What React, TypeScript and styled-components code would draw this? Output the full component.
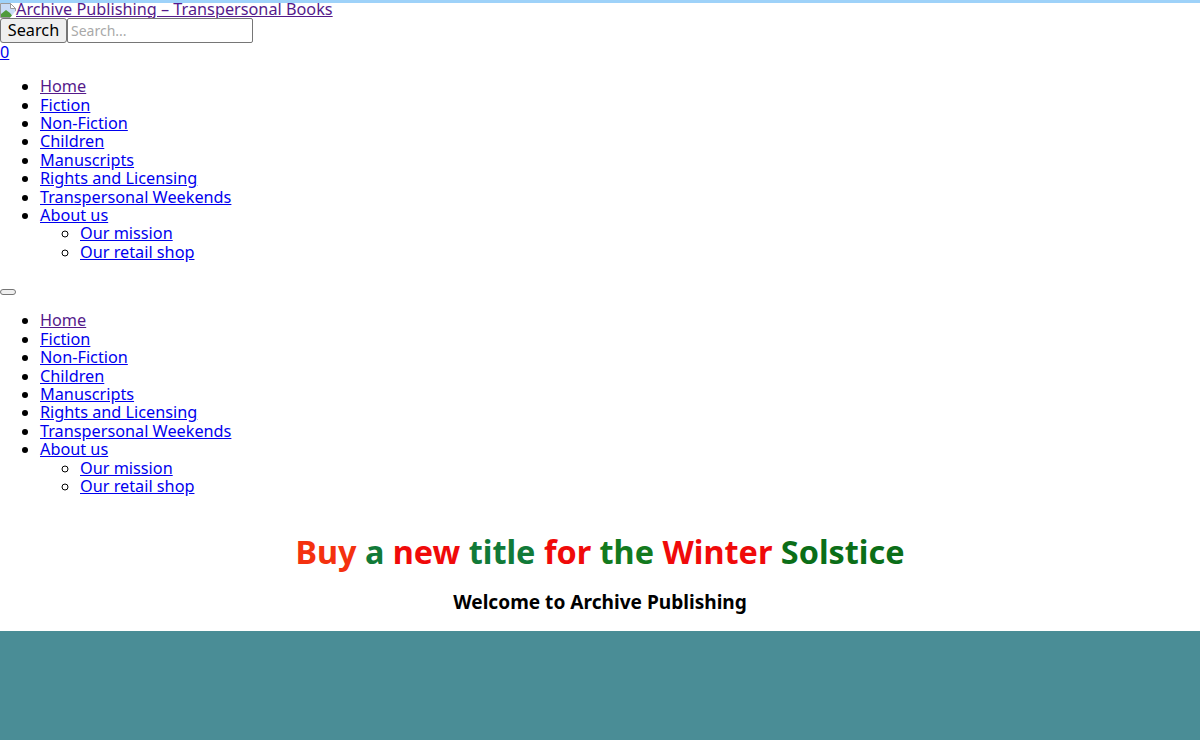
import React from "react";
import styled, { createGlobalStyle } from "styled-components";

const Global = createGlobalStyle`
  html, body { margin: 0; padding: 0; background: #fff; }
  body { font-family: "Noto Sans", "Open Sans", sans-serif; font-size: 16.25px; line-height: 18.4px; color: #000; overflow: hidden; }
  a { color: #0000ee; }
`;

const Page = styled.div`
  height: 740px;
  border-top: 3px solid #9ed2f9;
  box-sizing: border-box;
  display: flex;
  flex-direction: column;
`;
const LogoLink = styled.a`
  display: flex;
  align-items: flex-end;
  height: 15px;
  color: #551a8b;
  white-space: nowrap;
  width: max-content;
`;
const BrokenIcon = styled.svg`
  flex: none;
  align-self: flex-start;
  width: 16px;
  height: 16px;
`;
const SearchForm = styled.form`
  display: flex;
  height: 25px;
`;
const SearchButton = styled.button`
  font: inherit;
  width: 67px;
  height: 25px;
  padding: 0;
  background: #efefef;
  border: 1px solid #767676;
  border-radius: 3px;
  color: #000;
`;
const SearchInput = styled.input`
  width: 186px;
  height: 25px;
  box-sizing: border-box;
  padding: 1px 3px;
  font-family: inherit;
  font-size: 14px;
  border: 1px solid #767676;
  border-radius: 2px;
  &::placeholder { color: #a9a9a9; }
`;
const CartLink = styled.a`
  display: block;
  width: max-content;
`;
const List = styled.ul<{ $top: number }>`
  margin: ${(p) => p.$top}px 0 0;
  padding-left: 40px;
  list-style: disc;
`;
const SubList = styled.ul`
  margin: 0;
  padding-left: 40px;
  list-style: circle;
`;
const Item = styled.li`
  height: auto;
`;
const Visited = styled.a`
  color: #551a8b;
`;
const Toggle = styled.button`
  display: block;
  width: 16px;
  height: 6px;
  padding: 0;
  margin-top: 28px;
  background: #efefef;
  border: 1px solid #767676;
  border-radius: 3px;
`;
const Headline = styled.h1`
  margin: 33.8px 0 0;
  font-size: 32.4px;
  line-height: 44px;
  font-weight: 700;
  text-align: center;
`;
const Word = styled.span<{ $color: string }>`
  color: ${(p) => p.$color};
`;
const Welcome = styled.h2`
  margin: 15px 0 0;
  font-size: 19.1px;
  line-height: 28px;
  font-weight: 700;
  text-align: center;
`;
const Band = styled.div`
  flex: 1;
  margin-top: 15px;
  background: #4a8d96;
`;

const BrokenImage = () => (
  <BrokenIcon viewBox="0 0 16 16">
    <path d="M.5.5h10l5 5v9h-15z" fill="#c9dcf6" stroke="#9a9a9a" />
    <path d="M10.5.5v5h5z" fill="#fff" stroke="#9a9a9a" />
    <path d="M1 14V11l5-4 4 3 3 4z" fill="#4f9a3c" />
    <path d="M16 7.5 9 16h7z" fill="#fff" />
  </BrokenIcon>
);

const Menu = ({ top }: { top: number }) => (
  <List $top={top}>
    <Item><Visited href="#">Home</Visited></Item>
    <Item><a href="#">Fiction</a></Item>
    <Item><a href="#">Non-Fiction</a></Item>
    <Item><a href="#">Children</a></Item>
    <Item><a href="#">Manuscripts</a></Item>
    <Item><a href="#">Rights and Licensing</a></Item>
    <Item><a href="#">Transpersonal Weekends</a></Item>
    <Item>
      <a href="#">About us</a>
      <SubList>
        <Item><a href="#">Our mission</a></Item>
        <Item><a href="#">Our retail shop</a></Item>
      </SubList>
    </Item>
  </List>
);

const words: [string, string][] = [
  ["Buy", "#f4310f"],
  ["a", "#117a38"],
  ["new", "#f00a0a"],
  ["title", "#117a38"],
  ["for", "#f00a0a"],
  ["the", "#137a1e"],
  ["Winter", "#f00a0a"],
  ["Solstice", "#0b6e18"],
];

export default function App() {
  return (
    <Page>
      <Global />
      <LogoLink href="#"><BrokenImage />Archive Publishing – Transpersonal Books</LogoLink>
      <SearchForm onSubmit={(e) => e.preventDefault()}>
        <SearchButton type="submit">Search</SearchButton>
        <SearchInput placeholder="Search..." />
      </SearchForm>
      <CartLink href="#">0</CartLink>
      <Menu top={15.7} />
      <Toggle type="button" aria-label="Menu" />
      <Menu top={16.2} />
      <Headline>
        {words.map(([w, c], i) => (
          <React.Fragment key={i}>
            <Word $color={c}>{w}</Word>{i < words.length - 1 ? " " : ""}
          </React.Fragment>
        ))}
      </Headline>
      <Welcome>Welcome to Archive Publishing</Welcome>
      <Band />
    </Page>
  );
}
